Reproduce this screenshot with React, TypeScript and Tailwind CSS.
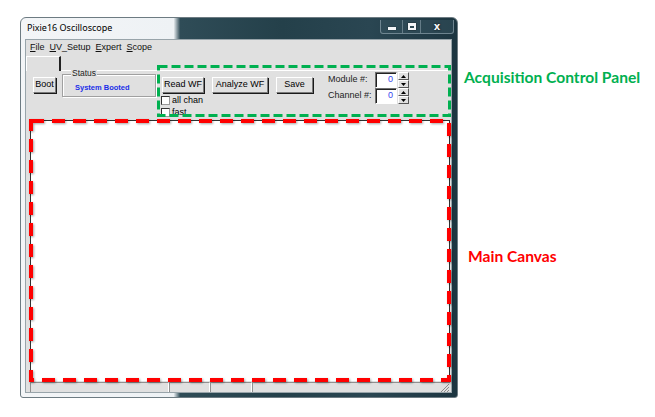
import React from "react";

const ui = "font-['Liberation_Sans',Arial,sans-serif]";

function RootButton({ label, w }: { label: string; w: string }) {
  return (
    <div
      className={`${w} h-[16px] flex items-center justify-center bg-[#e0e0e0] border border-t-white border-l-white border-r-[#7a7a7a] border-b-[#7a7a7a] shadow-[1px_1px_0_#1a1a1a] text-[9px] text-black`}
    >
      {label}
    </div>
  );
}

function Check({ label }: { label: string }) {
  return (
    <div className="flex items-center gap-[2px] h-[12px]">
      <div className="w-[9px] h-[9px] bg-white border border-[#333] border-r-[#999] border-b-[#999]" />
      <span className="text-[9px] leading-none">{label}</span>
    </div>
  );
}

function NumberField({ label }: { label: string }) {
  return (
    <div className="flex items-center h-[16px]">
      <span className="w-[47px] text-[9px] text-[#222]">{label}</span>
      <div className="w-[22px] h-[16px] bg-white border border-t-[#707070] border-l-[#707070] border-r-white border-b-white shadow-[inset_1px_1px_0_#222] flex items-center justify-end pr-[3px] text-[9px] text-[#3344ee]">
        0
      </div>
      <div className="ml-[1px] w-[11px] h-[16px] flex flex-col">
        <div className="h-[8px] bg-[#e0e0e0] border border-t-white border-l-white border-r-[#555] border-b-[#555] flex items-center justify-center">
          <svg width="5" height="3" viewBox="0 0 5 3">
            <path d="M0 3 L2.5 0 L5 3 Z" fill="#000" />
          </svg>
        </div>
        <div className="h-[8px] bg-[#e0e0e0] border border-t-white border-l-white border-r-[#555] border-b-[#555] flex items-center justify-center">
          <svg width="5" height="3" viewBox="0 0 5 3">
            <path d="M0 0 L5 0 L2.5 3 Z" fill="#000" />
          </svg>
        </div>
      </div>
    </div>
  );
}

function CaptionButtons() {
  return (
    <div className="flex h-[14px] mt-[2px] border border-t-0 border-[#8aa0aa]/70 rounded-b-[3px] overflow-hidden bg-[#3c5a66]/40">
      <div className="w-[22px] flex items-center justify-center border-r border-[#8aa0aa]/60">
        <div className="w-[8px] h-[3px] bg-[#f4f6f8] mt-[3px] shadow-[0_0_1px_#000]" />
      </div>
      <div className="w-[18px] flex items-center justify-center border-r border-[#8aa0aa]/60">
        <div className="w-[8px] h-[7px] border-2 border-t-[3px] border-[#f4f6f8] shadow-[0_0_1px_#000]" />
      </div>
      <div className="w-[32px] flex items-center justify-center">
        <span className="text-[10px] font-bold leading-none text-[#f4f6f8] font-['DejaVu_Sans',sans-serif] [text-shadow:0_0_2px_#000]">
          x
        </span>
      </div>
    </div>
  );
}

export default function App() {
  return (
    <div className={`relative w-[655px] h-[417px] bg-white overflow-hidden ${ui}`}>
      {/* window */}
      <div className="ml-[20px] mt-[17px] w-[438px] h-[381px] rounded-t-[6px] rounded-b-[3px] border border-[#6d7b82] bg-[linear-gradient(to_right,#f3f5f7_0%,#eef2f5_35%,#2f4c57_36.5%,#24404a_60%,#2a4652_80%,#1c3540_100%)] flex flex-col pl-[4px] pr-[5px] pb-[4px]">
        {/* title bar */}
        <div className="h-[21px] flex items-start justify-between">
          <span className="mt-[5px] ml-[2px] text-[9px] text-black font-['Noto_Sans',sans-serif] leading-none">
            Pixie16 Oscilloscope
          </span>
          <div className="-mr-[2px]">
            <CaptionButtons />
          </div>
        </div>

        {/* client area */}
        <div className="flex-1 flex flex-col bg-[#e0e0e0] border border-[#98a4aa]">
          {/* menu bar */}
          <div className="h-[15px] flex items-center gap-[5px] pl-[4px] text-[9px] text-[#111]">
            <span><u>F</u>ile</span>
            <span><u>U</u>V_Setup</span>
            <span><u>E</u>xpert</span>
            <span><u>S</u>cope</span>
          </div>

          {/* tab strip */}
          <div className="h-[15px] flex">
            <div className="w-[35px] h-[15px] border-t border-l border-white border-r-2 border-r-[#222] mt-[1px]" />
            <div className="flex-1 border-b border-white mt-[15px]" />
          </div>

          {/* control row */}
          <div className="h-[49px] flex items-start">
            <div className="ml-[7px] mt-[7px]">
              <RootButton label="Boot" w="w-[23px]" />
            </div>
            <div className="relative ml-[6px] mt-[4px] w-[94px] h-[23px] border border-[#a0a0a0] shadow-[inset_1px_1px_0_#fff,1px_1px_0_#fff]">
              <span className="absolute left-[8px] -top-[6px] px-[1px] bg-[#e0e0e0] text-[8.5px] leading-none text-[#222]">
                Status
              </span>
              <div className="pl-[12px] pt-[9px] text-[7.5px] font-bold text-[#1a2ee8] leading-none">
                System Booted
              </div>
            </div>
            <div className="ml-[6px] mt-[7px] flex flex-col">
              <div className="flex gap-[8px]">
                <RootButton label="Read WF" w="w-[42px]" />
                <RootButton label="Analyze WF" w="w-[56px]" />
                <RootButton label="Save" w="w-[37px]" />
              </div>
              <div className="mt-[1px] -ml-[1px]">
                <Check label="all chan" />
                <Check label="fast" />
              </div>
            </div>
            <div className="ml-[15px] mt-[2px] flex flex-col">
              <NumberField label="Module #:" />
              <NumberField label="Channel #:" />
            </div>
          </div>

          {/* main canvas */}
          <div className="flex-1 ml-[4px] mr-[1px] mt-[1px] bg-white border-t border-l border-[#303030] border-r border-r-[#303030]" />

          {/* status bar */}
          <div className="h-[11px] flex pl-[4px] pr-[1px] pt-[1px]">
            <div className="w-[139px] border-t border-l border-[#909090] border-r border-r-white" />
            <div className="w-[41px] border-t border-l border-[#909090] border-r border-r-white" />
            <div className="w-[42px] border-t border-l border-[#909090] border-r border-r-white" />
            <div className="flex-1 border-t border-l border-[#909090] flex justify-end items-end">
              <svg width="10" height="9" viewBox="0 0 10 9">
                <path d="M9 1 L1 9 M9 4 L4 9 M9 7 L7 9" stroke="#8a8a8a" strokeWidth="1" />
              </svg>
            </div>
          </div>
        </div>
      </div>

      {/* annotation rectangles */}
      <svg className="absolute inset-0 pointer-events-none" width="655" height="417">
        <rect
          x="158.5"
          y="66.5"
          width="291"
          height="49"
          fill="none"
          stroke="#00b050"
          strokeWidth="3"
          strokeDasharray="9 4"
        />
        <rect
          x="31"
          y="121"
          width="418"
          height="259"
          fill="none"
          stroke="#ff0000"
          strokeWidth="4"
          strokeDasharray="13 8"
          style={{ filter: "drop-shadow(1px 1px 1px rgba(0,0,0,0.35))" }}
        />
      </svg>

      {/* annotation labels */}
      <div className="absolute left-[464px] top-[67px] text-[15.6px] font-bold text-[#00b050] font-['Lato',sans-serif] leading-[20px]">
        Acquisition Control Panel
      </div>
      <div className="absolute left-[468px] top-[246px] text-[15.6px] font-bold text-[#ff0000] font-['Lato',sans-serif] leading-[20px]">
        Main Canvas
      </div>
    </div>
  );
}
